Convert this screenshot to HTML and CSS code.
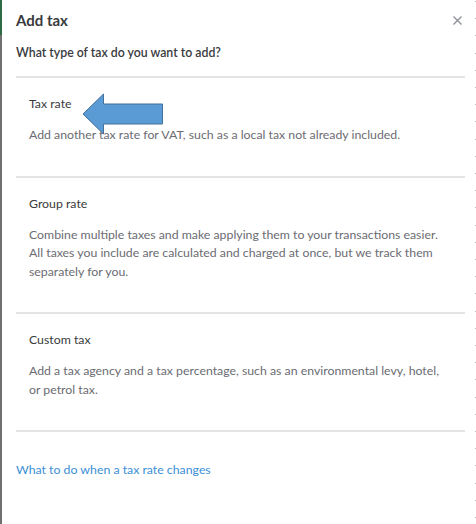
FILE: index.html
```html
<!DOCTYPE html>
<html lang="en">
<head>
<meta charset="utf-8">
<title>Add tax</title>
<link rel="stylesheet" href="styles.css">
</head>
<body>
<div class="frame">
  <div class="edge-left"></div>
  <div class="dialog">
    <header class="dialog-header">
      <h1 class="dialog-title">Add tax</h1>
      <button class="close" aria-label="Close">
        <svg width="9" height="9" viewBox="0 0 9 9"><path d="M0.5 0.5 L8.5 8.5 M8.5 0.5 L0.5 8.5" stroke="#8d9096" stroke-width="1.3" fill="none"/></svg>
      </button>
    </header>
    <p class="question">What type of tax do you want to add?</p>
    <div class="options">
      <section class="option">
        <div class="option-title-row">
          <h2 class="option-title">Tax rate</h2>
          <svg class="arrow" width="82" height="42" viewBox="0 0 82 42"><path d="M1 21 L21.5 1 L21.5 11 L80.5 11 L80.5 31 L21.5 31 L21.5 41 Z" fill="#5b9bd5" stroke="#41719c" stroke-width="1"/></svg>
        </div>
        <p class="option-desc">Add another tax rate for VAT, such as a local tax not already included.</p>
      </section>
      <section class="option">
        <h2 class="option-title">Group rate</h2>
        <p class="option-desc">Combine multiple taxes and make applying them to your transactions easier. All taxes you include are calculated and charged at once, but we track them separately for you.</p>
      </section>
      <section class="option">
        <h2 class="option-title">Custom tax</h2>
        <p class="option-desc">Add a tax agency and a tax percentage, such as an environmental levy, hotel, or petrol tax.</p>
      </section>
    </div>
    <a class="help-link" href="#">What to do when a tax rate changes</a>
  </div>
  <div class="edge-right"></div>
</div>
</body>
</html>
```

FILE: styles.css
```css
* { box-sizing: border-box; }
html, body { margin: 0; padding: 0; background: #fff; }
body { font-family: "Lato", "Open Sans", sans-serif; color: #393a3d; }

.frame {
  display: flex;
  width: 476px;
  height: 524px;
}
.edge-left {
  width: 2px;
  flex: none;
  background: linear-gradient(#2b6a44 0 35px, #707070 35px);
}
.edge-right {
  width: 1px;
  flex: none;
  background: repeating-linear-gradient(#ffffff 0 1px, #b9b9b9 1px 2px, #ffffff 2px 17.2px);
}
.dialog {
  flex: 1;
  padding: 0 10px 0 14px;
  display: flex;
  flex-direction: column;
}
.dialog-header {
  display: flex;
  justify-content: space-between;
  align-items: center;
  height: 40px;
}
.dialog-title {
  margin: 0;
  font-size: 15px;
  font-weight: 700;
  color: #393a3d;
  line-height: 20px;
}
.close {
  border: 0;
  background: none;
  padding: 0;
  margin-right: 3px;
  width: 9px;
  height: 9px;
  display: flex;
}
.question {
  margin: 0;
  font-size: 12.3px;
  line-height: 20px;
  font-weight: 600;
  color: #393a3d;
  padding: 3px 0 13px;
  border-bottom: 2px solid #e4e4e4;
}
.option {
  padding: 16px 16px 31px 13px;
  border-bottom: 2px solid #e4e4e4;
}
.option-title-row {
  display: flex;
  align-items: center;
  gap: 10px;
  height: 20px;
}
.option-title-row .arrow { margin-top: 19px; }
.option-title {
  margin: 0;
  font-size: 12.3px;
  font-weight: 400;
  line-height: 20px;
  color: #393a3d;
}
.option-desc {
  margin: 12px 0 0;
  font-size: 12.3px;
  line-height: 18.5px;
  color: #6b6c72;
}
.help-link {
  margin-top: 28px;
  font-size: 12.3px;
  line-height: 20px;
  color: #3b8fd6;
  text-decoration: none;
}
```
